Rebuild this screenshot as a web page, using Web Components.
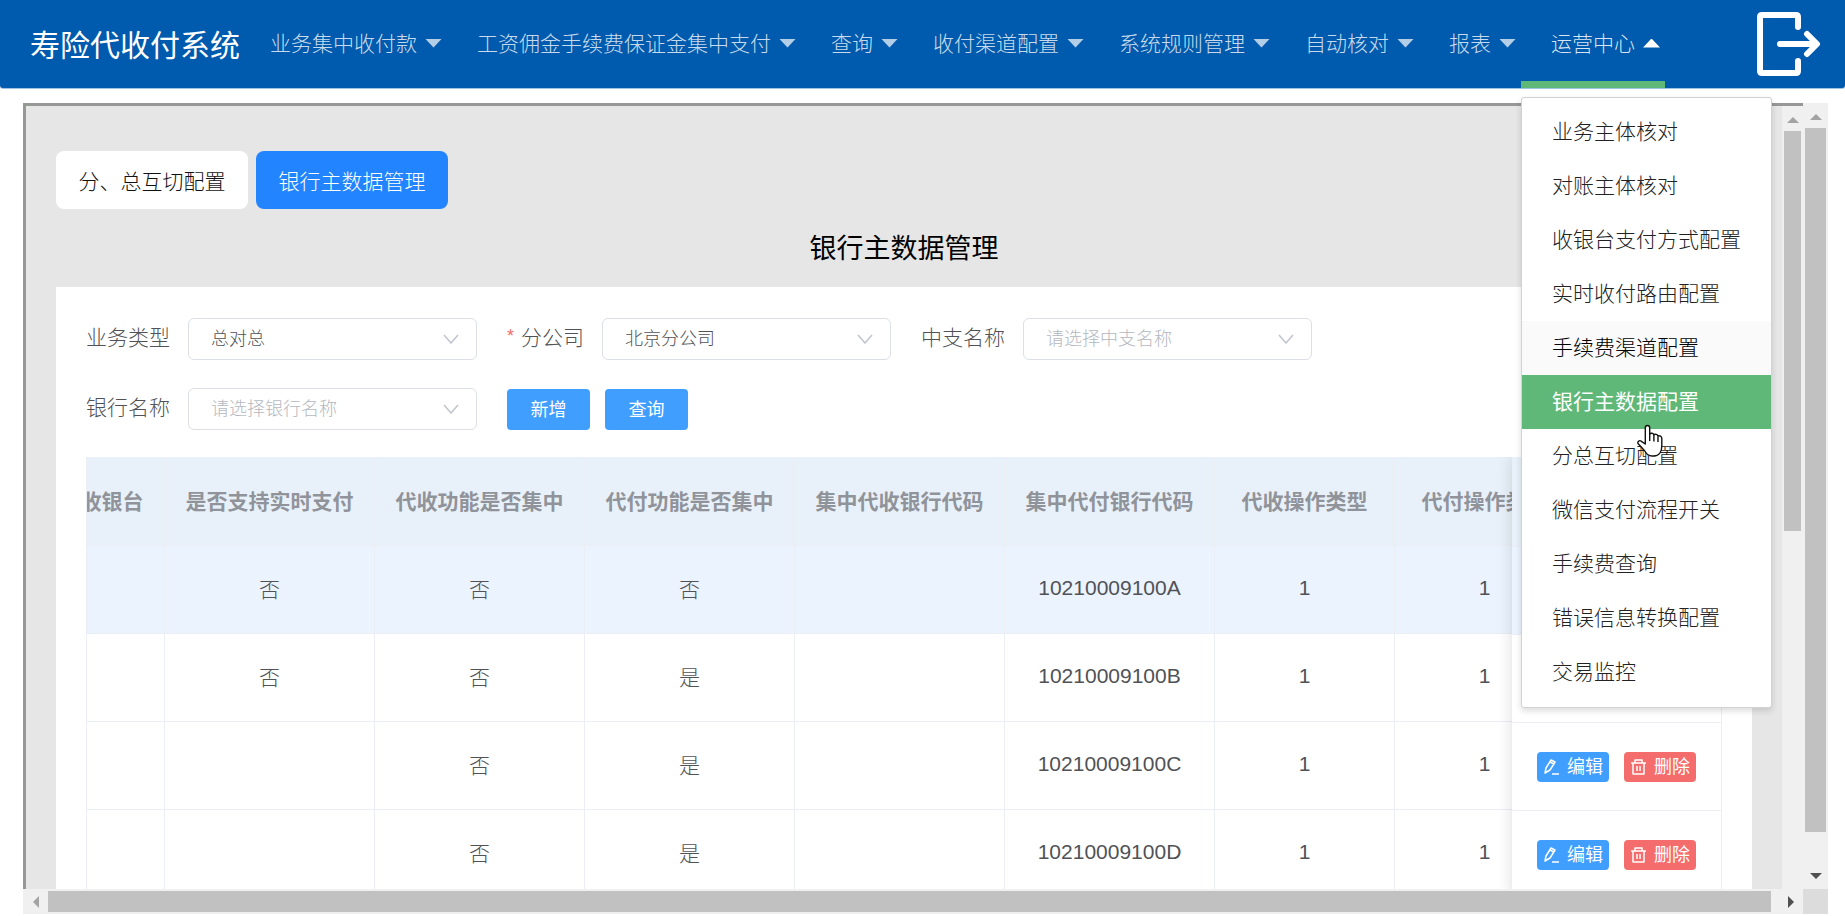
<!DOCTYPE html>
<html lang="zh-CN">
<head>
<meta charset="utf-8">
<title>寿险代收付系统</title>
<style>
html,body{height:100%;margin:0}
body{font-family:"Liberation Sans","Noto Sans CJK SC",sans-serif;font-weight:300;font-size:21px;color:#333;background:#fff;overflow:hidden}
</style>
</head>
<body>
<pay-app></pay-app>
<script>
const define=(name,html,init)=>customElements.define(name,class extends HTMLElement{
  connectedCallback(){
    if(this.shadowRoot)return;
    const root=this.attachShadow({mode:'open'});
    root.innerHTML='<style>*{box-sizing:border-box}</style>'+(typeof html==='function'?html(this):html);
    if(init)init(this,root);
  }
});

define('nav-item',el=>`<style>
:host{display:block;position:relative}
a{display:flex;align-items:center;gap:8px;height:88px;padding:0 5px 2px 30px;color:rgba(255,255,255,.8);text-decoration:none;white-space:nowrap}
span{padding-bottom:2px}
i{width:17px;height:9px;background:rgba(255,255,255,.7);clip-path:polygon(0 0,100% 0,50% 100%)}
:host([open]) a{color:rgba(255,255,255,.86)}
:host([open]) i{background:#fff;clip-path:polygon(50% 0,100% 100%,0 100%)}
:host([open])::after{content:"";position:absolute;left:0;right:0;bottom:0;height:7px;background:#5fb878}
::slotted(drop-menu){position:absolute;top:97px;left:0;z-index:5}
</style><a href="#"><span>${el.getAttribute('label')}</span><i></i></a><slot></slot>`);

define('menu-item',`<style>
:host{display:block}
a{display:block;height:54px;line-height:54px;padding:0 30px;color:#222;text-decoration:none;white-space:nowrap}
:host([recent]) a{background:#fafafa;color:#000}
:host([selected]) a{background:#5fb878;color:#fff;font-weight:400}
</style><a href="#"><slot></slot></a>`);

define('drop-menu',`<style>
:host{display:block;width:251px;padding:7px 0 8px;background:#fff;border:1px solid #d2d2d2;border-radius:3px;box-shadow:0 3px 6px rgba(0,0,0,.14)}
</style><slot></slot>`);

define('top-bar',`<style>
:host{display:flex;align-items:center;height:88px;padding:0 24px 0 30px;background:#005aad;border-radius:0 0 3px 3px;box-shadow:0 1px 0 #9fc3e4;position:relative;z-index:4}
h1{margin:0;padding-top:3px;font-size:30px;font-weight:400;color:#fff;line-height:44px;white-space:nowrap}
nav{display:flex;flex:1}
button{display:block;padding:0;border:0;background:none;line-height:0}
</style>
<h1>寿险代收付系统</h1>
<nav>
<nav-item label="业务集中收付款"></nav-item>
<nav-item label="工资佣金手续费保证金集中支付"></nav-item>
<nav-item label="查询"></nav-item>
<nav-item label="收付渠道配置"></nav-item>
<nav-item label="系统规则管理"></nav-item>
<nav-item label="自动核对"></nav-item>
<nav-item label="报表"></nav-item>
<nav-item label="运营中心" open><drop-menu>
<menu-item>业务主体核对</menu-item>
<menu-item>对账主体核对</menu-item>
<menu-item>收银台支付方式配置</menu-item>
<menu-item>实时收付路由配置</menu-item>
<menu-item recent>手续费渠道配置</menu-item>
<menu-item selected>银行主数据配置</menu-item>
<menu-item>分总互切配置</menu-item>
<menu-item>微信支付流程开关</menu-item>
<menu-item>手续费查询</menu-item>
<menu-item>错误信息转换配置</menu-item>
<menu-item>交易监控</menu-item>
</drop-menu></nav-item>
</nav>
<button aria-label="退出"><svg width="64" height="64" viewBox="0 0 64 64" fill="none" stroke="#fff" stroke-width="6" stroke-linecap="round" stroke-linejoin="round"><path d="M41 15V5q0-2-2-2H5Q3 3 3 5V59q0 2 2 2H39q2 0 2-2V49M23 32H59M50 22L60 32L50 42"/></svg></button>`);

define('tab-button',`<style>
:host{display:block}
button{height:58px;min-width:192px;padding:0 22px;border:0;border-radius:8px;background:#fff;color:#111;font:inherit;white-space:nowrap}
:host([active]) button{background:#2284ff;color:#fff}
</style><button><slot></slot></button>`);

define('form-select',el=>`<style>
:host{display:flex;align-items:center}
label{color:#505256;white-space:nowrap;margin-right:18px;line-height:40px;padding-bottom:2px}
b{font-weight:400;font-size:18px;color:#f56c6c;margin-right:7px;vertical-align:top;line-height:36px}
div{position:relative}
select{display:block;appearance:none;width:289px;height:42px;padding:0 48px 0 22px;border:1px solid #dcdfe6;border-radius:6px;background:#fff;color:${el.hasAttribute('empty')?'#b4b8c0':'#505256'};font:inherit;font-size:18px}
svg{position:absolute;right:18px;top:16px}
</style><label for="s">${el.hasAttribute('required')?'<b>*</b>':''}${el.getAttribute('label')}</label>
<div><select id="s"><option>${el.getAttribute('value')}</option></select>
<svg width="16" height="10" viewBox="0 0 16 10" fill="none" stroke="#c0c4cc" stroke-width="1.5"><path d="M1 1L8 9L15 1"/></svg></div>`);

define('primary-button',`<style>
:host{display:block}
button{height:41px;min-width:83px;padding:0 22px 2px;border:0;border-radius:4px;background:#409eff;color:#fff;font:inherit;font-weight:400;font-size:18px}
</style><button><slot></slot></button>`);

const icons={
edit:'<path d="M2 14L3 9L8 1L12 3L7 11L2 14ZM7 3L11 5M9 15H16"/>',
del:'<path d="M1 4H16M5 4V1H12V4M3 4V15H14V4M7 7V12M10 7V12"/>'};
define('row-button',el=>`<style>
:host{display:block}
button{display:flex;align-items:center;gap:7px;height:30px;padding:0 6px;border:0;border-radius:4px;background:${el.getAttribute('kind')==='del'?'#f56c6c':'#409eff'};color:#fff;font:inherit;font-weight:400;font-size:18px;line-height:28px;white-space:nowrap}
</style><button><svg width="17" height="16" viewBox="0 0 17 16" fill="none" stroke="#fff" stroke-width="1.5" stroke-linejoin="round">${icons[el.getAttribute('kind')]}</svg><slot></slot></button>`);

const heads=[['收银台',105],['是否支持实时支付',210],['代收功能是否集中',210],['代付功能是否集中',210],['集中代收银行代码',210],['集中代付银行代码',210],['代收操作类型',180],['代付操作类型',180]];
const rows=[['','否','否','否','','10210009100A','1','1'],['','否','否','是','','10210009100B','1','1'],['','','否','是','','10210009100C','1','1'],['','','否','是','','10210009100D','1','1']];
define('bank-table',`<style>
:host{display:flex;border-left:1px solid #ebeef5;border-right:1px solid #ebeef5}
.scroll{flex:1;min-width:0;overflow:hidden}
.scroll table{margin-left:-27px;width:1515px}
table{table-layout:fixed;border-collapse:separate;border-spacing:0}
th,td{height:88px;padding:0;text-align:center;border-right:1px solid #ebeef5;border-bottom:1px solid #ebeef5;color:#505256;white-space:nowrap}
.scroll th,.scroll td{padding-bottom:3px}
th{height:89px;background:#e8f1f9;color:#909399;font-weight:700}
tr.hover td{background:#ebf3fe}
.fixed{width:209px;background:#fff;box-shadow:0 0 15px rgba(0,0,0,.14);clip-path:inset(0 0 0 -16px);position:relative}
.fixed table{width:209px}
.fixed th,.fixed td{border-right:0}
.fixed th{height:90px}
.acts{display:flex;justify-content:center;gap:15px}
</style>
<div class="scroll"><table><colgroup>${heads.map(h=>`<col style="width:${h[1]}px">`).join('')}</colgroup>
<thead><tr>${heads.map(h=>`<th>${h[0]}</th>`).join('')}</tr></thead>
<tbody>${rows.map((r,i)=>`<tr${i?'':' class="hover"'}>${r.map(c=>`<td>${c}</td>`).join('')}</tr>`).join('')}</tbody></table></div>
<div class="fixed"><table><thead><tr><th></th></tr></thead>
<tbody>${rows.map((r,i)=>`<tr${i?'':' class="hover"'}><td>${i>1?'<div class="acts"><row-button kind="edit">编辑</row-button><row-button kind="del">删除</row-button></div>':''}</td></tr>`).join('')}</tbody></table></div>`);

define('scroll-bar',el=>{
const v=el.hasAttribute('vertical');
return `<style>
:host{display:flex;flex-direction:${v?'column':'row'};background:#f0f0f0;min-width:0;min-height:0}
span{flex:none;${v?'height':'width'}:25px;display:flex;align-items:center;justify-content:center}
.track{flex:1;min-height:0;min-width:0;display:flex;flex-direction:${v?'column':'row'};padding:${v?'0 2px':'2px 0'}}
.thumb{background:#c1c1c1;${v?'height':'width'}:${el.getAttribute('size')}}
</style><span><svg width="12" height="12" viewBox="0 0 12 12" fill="#a3a3a3"><path d="${v?'M0 10L6 4L12 10Z':'M9 0L3 6L9 12Z'}"/></svg></span>
<div class="track"><div class="thumb"></div></div>
${el.hasAttribute('cut')?'':`<span><svg width="12" height="12" viewBox="0 0 12 12" fill="#505050"><path d="${v?'M0 2L6 8L12 2Z':'M3 0L9 6L3 12Z'}"/></svg></span>`}`});

define('bank-page',`<style>
:host{display:flex;flex-direction:column;background:#e6e6e6;padding:45px 30px 0;min-width:0;min-height:0;overflow:hidden}
.tabs{display:flex;gap:8px}
h2{margin:18px 0 16px;font-size:27px;font-weight:400;line-height:44px;text-align:center;color:#000}
section{background:#fff;padding:31px 30px 60px}
.row{display:flex;gap:30px;height:42px;margin-bottom:28px;align-items:center}
.row+.row{margin-bottom:27px}
.btns{display:flex;gap:15px}
</style>
<div class="tabs"><tab-button>分、总互切配置</tab-button><tab-button active>银行主数据管理</tab-button></div>
<h2>银行主数据管理</h2>
<section>
<div class="row"><form-select label="业务类型" value="总对总"></form-select><form-select label="分公司" value="北京分公司" required></form-select><form-select label="中支名称" value="请选择中支名称" empty></form-select></div>
<div class="row"><form-select label="银行名称" value="请选择银行名称" empty></form-select><div class="btns"><primary-button>新增</primary-button><primary-button>查询</primary-button></div></div>
<bank-table></bank-table>
</section>`);

define('hand-cursor',`<style>:host{display:block;line-height:0;pointer-events:none}</style>
<svg width="28" height="34" viewBox="0 0 28 34" stroke="#111" stroke-width="1.4" stroke-linejoin="round"><path d="M11.500 1.500c1.400 0 2.200 1 2.200 2.300V10c1-1.300 3.800-1 4.200.8 1.200-1 3.800-.4 4.100 1.300 1.500-.8 3.800 0 3.800 2.200V22c0 5-2.300 10-8 10h-2c-3.500 0-5.300-2-7-5L2 19.500c-1-2 1.600-3.800 3.400-2.200L9.300 20V3.800c0-1.300.8-2.300 2.200-2.300Z" fill="#fff"/><path d="M13.700 10V17M17.900 11V17.500M22 12.500V18" fill="none"/></svg>`);

define('pay-app',`<style>
:host{display:flex;flex-direction:column;height:100vh;position:relative}
top-bar{flex:none}
main{flex:1;min-height:0;display:grid;grid-template-columns:minmax(0,1fr) 25px;grid-template-rows:minmax(0,1fr) 25px;margin:15px 17px 2px 23px}
.frame{display:grid;grid-template-columns:minmax(0,1fr) 21px;min-height:0;border:solid #969896;border-width:3px 0 0 3px;overflow:hidden}
.corner{background:#dcdcdc}
hand-cursor{position:absolute;left:1636px;top:424px;z-index:9}
</style>
<top-bar></top-bar>
<main>
<div class="frame"><bank-page></bank-page><scroll-bar vertical cut size="400px"></scroll-bar></div>
<scroll-bar vertical size="calc(100% - 32px)"></scroll-bar>
<scroll-bar size="calc(100% - 7px)"></scroll-bar>
<div class="corner"></div>
</main>
<hand-cursor></hand-cursor>`);
</script>
</body>
</html>
